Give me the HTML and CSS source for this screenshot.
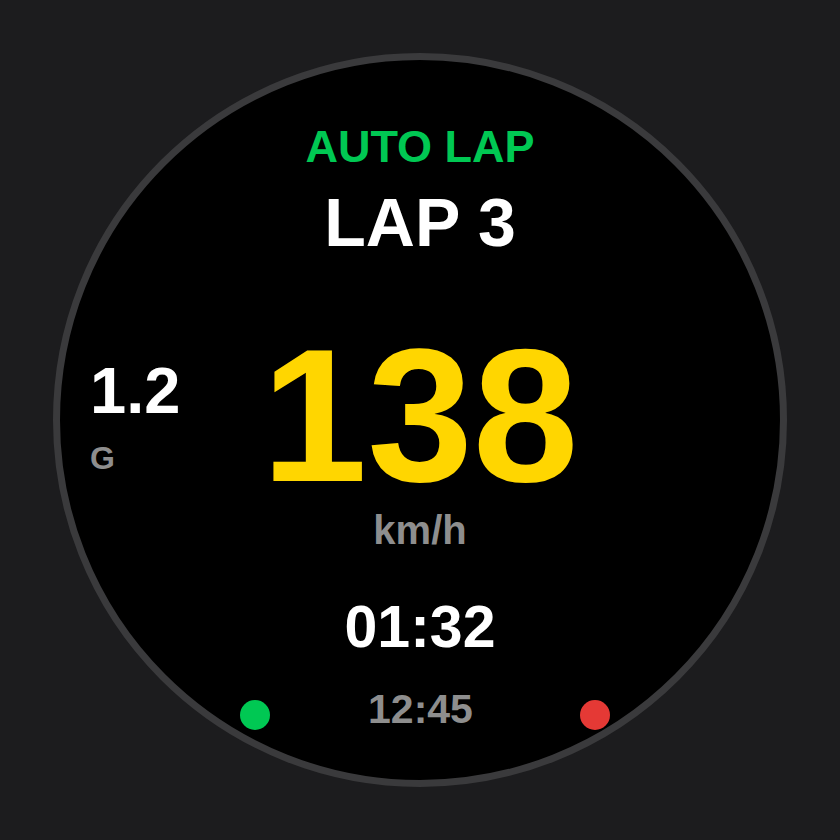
FILE: index.html
```html
<!DOCTYPE html>
<html>
<head>
<meta charset="utf-8">
<link rel="stylesheet" href="styles.css">
</head>
<body>
<div class="watch">
  <div class="mode">AUTO LAP</div>
  <div class="lap">LAP 3</div>
  <div class="middle">
    <div class="gforce">
      <div class="g-value">1.2</div>
      <div class="g-label">G</div>
    </div>
    <div class="speed">138</div>
    <div class="spacer"></div>
  </div>
  <div class="unit">km/h</div>
  <div class="timer">01:32</div>
  <div class="bottom">
    <span class="dot dot-green"></span>
    <span class="clock">12:45</span>
    <span class="dot dot-red"></span>
  </div>
</div>
</body>
</html>
```
FILE: styles.css
```css
html, body {
  margin: 0;
  padding: 0;
}
body {
  background: #1c1c1e;
  height: 840px;
  display: flex;
  align-items: center;
  justify-content: center;
  font-family: "Liberation Sans", Arial, sans-serif;
  font-weight: bold;
}
.watch {
  width: 720px;
  height: 720px;
  border: 7px solid #3a3a3c;
  border-radius: 50%;
  background: #000;
  box-sizing: content-box;
  display: flex;
  flex-direction: column;
  align-items: center;
  overflow: hidden;
}
.mode {
  margin-top: 64px;
  font-size: 45px;
  line-height: 1;
  color: #00c853;
}
.lap {
  margin-top: 19px;
  font-size: 68px;
  line-height: 1;
  color: #fff;
}
.middle {
  margin-top: 64px;
  width: 100%;
  display: grid;
  grid-template-columns: 1fr auto 1fr;
  align-items: start;
}
.gforce {
  justify-self: start;
  margin-top: 38px;
  padding-left: 30px;
  display: flex;
  flex-direction: column;
}
.g-value {
  font-size: 65px;
  line-height: 1;
  color: #fff;
}
.g-label {
  margin-top: 19px;
  font-size: 32px;
  line-height: 1;
  color: #8e8e8e;
}
.speed {
  font-size: 190px;
  line-height: 1;
  color: #ffd600;
}
.unit {
  margin-top: 0;
  font-size: 40px;
  line-height: 1;
  color: #8e8e8e;
}
.timer {
  margin-top: 48px;
  font-size: 59px;
  line-height: 1;
  color: #fff;
}
.bottom {
  margin-top: 32px;
  margin-left: 10px;
  display: flex;
  align-items: flex-start;
}
.clock {
  font-size: 41px;
  line-height: 1;
  color: #8e8e8e;
}
.dot {
  width: 30px;
  height: 30px;
  border-radius: 50%;
  margin-top: 11px;
}
.dot-green {
  background: #00c853;
  margin-right: 98px;
}
.dot-red {
  background: #e53935;
  margin-left: 107px;
}
```
